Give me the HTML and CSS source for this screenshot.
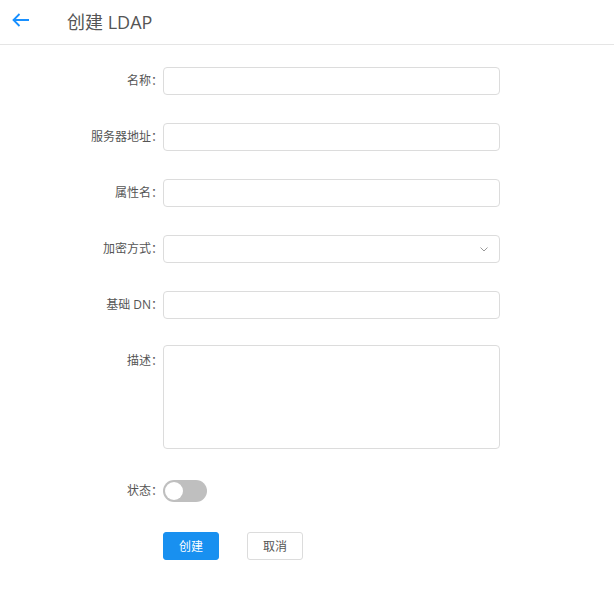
FILE: index.html
```html
<!DOCTYPE html>
<html lang="zh">
<head>
<meta charset="utf-8">
<title>创建 LDAP</title>
<link rel="stylesheet" href="styles.css">
</head>
<body>
<header class="header">
  <span class="back">
    <svg width="18" height="14" viewBox="0 0 18 14"><path d="M1.5 7H17M7.5 1L1.5 7L7.5 13" fill="none" stroke="#1890ff" stroke-width="1.8" stroke-linejoin="miter"/></svg>
  </span>
  <h1 class="title">创建 LDAP</h1>
</header>
<form class="form">
  <div class="row"><label class="label">名称：</label><input class="input" type="text"></div>
  <div class="row"><label class="label">服务器地址：</label><input class="input" type="text"></div>
  <div class="row"><label class="label">属性名：</label><input class="input" type="text"></div>
  <div class="row"><label class="label">加密方式：</label>
    <div class="input select"><svg class="caret" width="8" height="5" viewBox="0 0 8 5"><path d="M0.5 0.5L4 4L7.5 0.5" fill="none" stroke="#999" stroke-width="1"/></svg></div>
  </div>
  <div class="row"><label class="label">基础 DN：</label><input class="input" type="text"></div>
  <div class="row desc"><label class="label">描述：</label><textarea class="input textarea"></textarea></div>
  <div class="row status"><label class="label">状态：</label><span class="switch"><span class="knob"></span></span></div>
  <div class="row"><span class="label"></span><button type="button" class="btn primary">创建</button><button type="button" class="btn">取消</button></div>
</form>
</body>
</html>
```
FILE: styles.css
```css
* { box-sizing: border-box; }
body {
  margin: 0;
  background: #fff;
  font-family: "Open Sans", "Noto Sans CJK SC", sans-serif;
  color: #555;
}
.header {
  height: 45px;
  border-bottom: 1px solid #e5e5e5;
  display: flex;
  align-items: center;
}
.back {
  width: 67px;
  padding-left: 12px;
  display: flex;
  align-items: center;
  margin-top: -4px;
}
.title {
  margin: 0;
  font-size: 18px;
  font-weight: normal;
  color: #555;
  margin-top: -2px;
}
.form {
  padding-top: 22px;
}
.row {
  display: flex;
  align-items: center;
  margin-bottom: 28px;
}
.row.desc { align-items: flex-start; margin-top: -2px; }
.row.status { margin-bottom: 27px; }
.label {
  width: 163px;
  flex: none;
  text-align: right;
  padding-right: 0;
  font-size: 12px;
  line-height: 28px;
  color: #555;
}
.row.desc .label { line-height: 32px; }
.input {
  width: 337px;
  height: 28px;
  border: 1px solid #dcdcdc;
  border-radius: 4px;
  background: #fff;
  outline: none;
  font: inherit;
  padding: 0 8px;
}
.select {
  display: flex;
  align-items: center;
  justify-content: flex-end;
  padding-right: 11px;
}
.textarea {
  height: 104px;
  resize: none;
  display: block;
}
.switch {
  width: 44px;
  height: 22px;
  border-radius: 11px;
  background: #bfbfbf;
  position: relative;
  display: block;
}
.knob {
  position: absolute;
  left: 2px;
  top: 2px;
  width: 18px;
  height: 18px;
  border-radius: 50%;
  background: #fff;
}
.btn {
  width: 56px;
  height: 28px;
  border: 1px solid #dcdcdc;
  border-radius: 3px;
  background: #fff;
  color: #555;
  font: inherit;
  font-size: 12px;
  margin-right: 28px;
  padding: 0;
}
.btn.primary {
  background: #1890f0;
  border-color: #1890f0;
  color: #fff;
}
```
